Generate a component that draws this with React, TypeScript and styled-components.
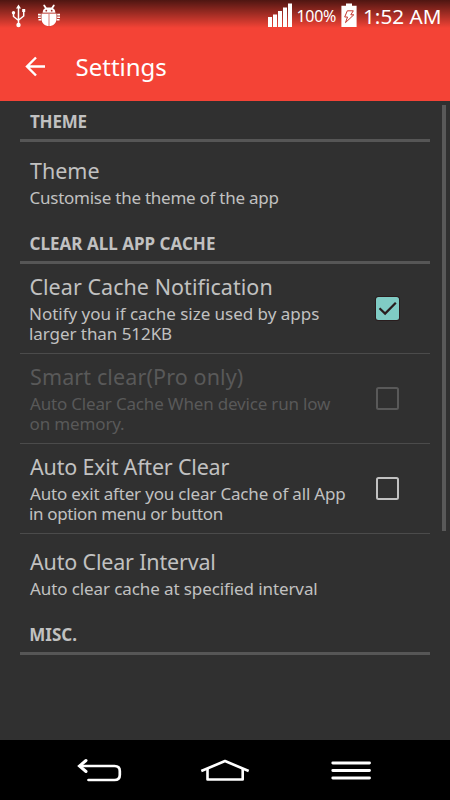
import React from 'react';
import styled, { createGlobalStyle } from 'styled-components';

const GlobalStyle = createGlobalStyle`
  body { margin: 0; background: #303030; }
`;

const Screen = styled.div`
  display: flex;
  flex-direction: column;
  width: 450px;
  height: 800px;
  overflow: hidden;
  background: #303030;
  color: #c1c1c1;
  font-family: "Noto Sans", sans-serif;
`;

const TopArea = styled.header`
  flex: none;
  height: 101px;
  background: linear-gradient(to bottom, rgba(0, 0, 0, 0.68), rgba(0, 0, 0, 0) 28px), #f44336;
  color: #fff;
`;

const StatusBar = styled.div`
  display: flex;
  align-items: flex-start;
  height: 33px;
  svg { display: block; flex: none; }
`;

const StatusSpacer = styled.div`
  flex: 1;
`;

const BatteryText = styled.span`
  width: 48px;
  padding: 6px 0 0 3.5px;
  box-sizing: border-box;
  font-size: 16px;
  line-height: 20px;
  letter-spacing: -0.3px;
`;

const Clock = styled.span`
  width: 92px;
  padding: 4px 0 0 5px;
  box-sizing: border-box;
  font-size: 20.7px;
  line-height: 24px;
  white-space: nowrap;
`;

const Toolbar = styled.div`
  display: flex;
  align-items: center;
  height: 68px;
  padding-left: 24px;
  svg { display: block; }
`;

const ToolbarTitle = styled.h1`
  margin: 0 0 0 29.5px;
  font-size: 24px;
  font-weight: 400;
  line-height: 34px;
`;

const Body = styled.main`
  display: flex;
  flex: 1;
  min-height: 0;
`;

const List = styled.div`
  width: 410px;
  margin-left: 20px;
`;

const Scrollbar = styled.div`
  width: 4px;
  height: 426px;
  margin: 4px 0 0 12px;
  background: #595959;
`;

const SectionHeader = styled.h2`
  box-sizing: border-box;
  height: 41px;
  margin: 0;
  padding: 10px 10px 0;
  border-bottom: 3px solid #565656;
  font-size: 17px;
  font-weight: 700;
  line-height: 22px;
`;

const Row = styled.section<{ $height: number; $top: number; $divider?: boolean; $disabled?: boolean }>`
  display: flex;
  box-sizing: border-box;
  height: ${p => p.$height}px;
  padding: ${p => p.$top}px 10px 0;
  border-bottom: ${p => (p.$divider ? '1px solid #4b4b4b' : 'none')};
  color: ${p => (p.$disabled ? '#595959' : '#c1c1c1')};
`;

const RowText = styled.div`
  width: 346px;
`;

const Line = styled.span<{ $spacing: number; $shift?: number }>`
  display: block;
  margin-left: ${p => p.$shift ?? 0}px;
  letter-spacing: ${p => p.$spacing}px;
  white-space: nowrap;
`;

const Title = styled.div`
  font-size: 21.5px;
  line-height: 28px;
`;

const Summary = styled.div`
  margin-top: 3px;
  font-size: 17px;
  line-height: 20.4px;
`;

const Check = styled.span<{ $checked?: boolean }>`
  box-sizing: border-box;
  flex: none;
  width: 23px;
  height: 23px;
  margin-top: 24px;
  border: ${p => (p.$checked ? 'none' : '2.5px solid currentColor')};
  border-radius: 2.5px;
  background: ${p => (p.$checked ? '#80cbc4' : 'transparent')};
  box-shadow: ${p => (p.$checked ? '0 0 0 1px #291c1d' : 'none')};
  svg { display: block; }
`;

const NavBar = styled.nav`
  display: grid;
  grid-template-columns: 124px 130px 42px;
  flex: none;
  height: 60px;
  box-sizing: border-box;
  padding: 16px 0 0 76px;
  background: #000;
  svg { display: block; }
`;

const UsbIcon = () => (
  <svg width="36" height="33" viewBox="0 0 36 33" fill="#fff">
    <path d="M18.5 4.500l2.500 4h-5z" />
    <path d="M18.500 7v17M13.500 13v3.500l5 4M23.700 11v5l-5 4" fill="none" stroke="#fff" strokeWidth="1.500" />
    <circle cx="18.500" cy="25" r="2.200" />
    <circle cx="13.500" cy="12.800" r="1.700" />
    <rect x="22.200" y="9" width="3" height="3" />
  </svg>
);

const BugIcon = () => (
  <svg width="26" height="33" viewBox="36 0 26 33">
    <path d="M44.200 5.500l2.300 3.500M53.800 5.500L51.500 9" stroke="#fff" strokeWidth="1.800" strokeLinecap="round" />
    <path d="M42.700 12.700c0-3.300 2-5.200 6.300-5.200s6.300 1.900 6.300 5.200z" fill="#fff" />
    <path d="M41.500 13.400h15v5c0 4.800-3.200 7.600-7.500 7.600s-7.500-2.800-7.500-7.600z" fill="#fff" />
    <path d="M38 14.600h2.800M38 17.200h2.800M38.500 19.800h2.800M57.200 14.600h2.800M57.200 17.200h2.800M56.700 19.800h2.800" stroke="#fff" strokeWidth="1.600" />
    <path d="M49 14v12M42 13.300h14" stroke="#d77a74" strokeWidth="1" />
    <circle cx="46.300" cy="10.700" r=".9" fill="#9d2c25" />
    <circle cx="51.700" cy="10.700" r=".9" fill="#9d2c25" />
  </svg>
);

const SignalIcon = () => (
  <svg width="25" height="33" viewBox="0 0 25 33" fill="#fff">
    <rect x="0" y="17" width="4" height="10" />
    <rect x="5" y="14.500" width="4" height="12.500" />
    <rect x="10" y="11" width="4" height="16" />
    <rect x="15" y="7.500" width="4" height="19.500" />
    <rect x="20" y="3.500" width="4" height="23.500" />
  </svg>
);

const BatteryIcon = () => (
  <svg width="17" height="33" viewBox="0 0 17 33">
    <path d="M5 3.500h6v2.200h4.600v21.300H.4V5.700H5z" fill="#fff" />
    <path d="M6.300 10.800h6l-2.500 4h3L4.500 22.600l2-5.600H3.700z" fill="none" stroke="#c5362d" strokeWidth="1" />
  </svg>
);

const BackArrow = () => (
  <svg width="22" height="22" viewBox="0 0 22 22" fill="none" stroke="#fff" strokeWidth="2.400">
    <path d="M21 10.500H3M12 1.500l-9 9 9 9" />
  </svg>
);

const BackIcon = () => (
  <svg width="48" height="28" viewBox="76 756 48 28" fill="none" stroke="#fff" strokeWidth="2.700">
    <path d="M80 766H114.500Q119.800 766 119.800 771V775Q119.800 780 114.500 780H88.500" strokeLinecap="round" />
    <path d="M86 760.500l-6.500 5.500 6.500 5.500" strokeWidth="3" strokeLinecap="round" />
  </svg>
);

const HomeIcon = () => (
  <svg width="50" height="28" viewBox="200 756 50 28" fill="none" stroke="#fff" strokeWidth="2.600" strokeLinejoin="round" strokeLinecap="square">
    <path d="M202.500 770.500L225 761l22.500 9.500" />
    <path d="M207.500 770v9.500h35.200V770" />
  </svg>
);

const MenuIcon = () => (
  <svg width="42" height="28" viewBox="330 756 42 28" stroke="#fff" strokeWidth="2.900" strokeLinecap="round">
    <path d="M332.800 763h36.700M332.800 770.500h36.700M332.800 778h36.700" />
  </svg>
);

export default function App() {
  return (
    <Screen>
      <GlobalStyle />
      <TopArea>
        <StatusBar>
          <UsbIcon />
          <BugIcon />
          <StatusSpacer />
          <SignalIcon />
          <BatteryText>100%</BatteryText>
          <BatteryIcon />
          <Clock>1:52 AM</Clock>
        </StatusBar>
        <Toolbar>
          <BackArrow />
          <ToolbarTitle>Settings</ToolbarTitle>
        </Toolbar>
      </TopArea>
      <Body>
        <List>
          <SectionHeader><Line $spacing={-0.2}>THEME</Line></SectionHeader>
          <Row $height={81} $top={15}>
            <RowText>
              <Title><Line $spacing={0}>Theme</Line></Title>
              <Summary><Line $spacing={-0.25} $shift={-0.5}>Customise the theme of the app</Line></Summary>
            </RowText>
          </Row>
          <SectionHeader><Line $spacing={0.02} $shift={-0.5}>CLEAR ALL APP CACHE</Line></SectionHeader>
          <Row $height={90} $top={9} $divider>
            <RowText>
              <Title><Line $spacing={0.04} $shift={-0.6}>Clear Cache Notification</Line></Title>
              <Summary>
                <Line $spacing={-0.02} $shift={-1}>Notify you if cache size used by apps</Line>
                <Line $spacing={-0.06} $shift={-1}>larger than 512KB</Line>
              </Summary>
            </RowText>
            <Check $checked>
              <svg width="23" height="23" viewBox="0 0 23 23" fill="none" stroke="#291c1d" strokeWidth="2.200">
                <path d="M3.500 11.200l5.600 5.400L19.800 5.800" />
              </svg>
            </Check>
          </Row>
          <Row $height={90} $top={9} $divider $disabled>
            <RowText>
              <Title><Line $spacing={0.12}>Smart clear(Pro only)</Line></Title>
              <Summary>
                <Line $spacing={-0.18}>Auto Clear Cache When device run low</Line>
                <Line $spacing={-0.14} $shift={-0.5}>on memory.</Line>
              </Summary>
            </RowText>
            <Check />
          </Row>
          <Row $height={90} $top={9} $divider>
            <RowText>
              <Title><Line $spacing={-0.2}>Auto Exit After Clear</Line></Title>
              <Summary>
                <Line $spacing={-0.175}>Auto exit after you clear Cache of all App</Line>
                <Line $spacing={-0.36} $shift={-1}>in option menu or button</Line>
              </Summary>
            </RowText>
            <Check />
          </Row>
          <Row $height={80} $top={14}>
            <RowText>
              <Title><Line $spacing={-0.18}>Auto Clear Interval</Line></Title>
              <Summary><Line $spacing={-0.1}>Auto clear cache at specified interval</Line></Summary>
            </RowText>
          </Row>
          <SectionHeader><Line $spacing={0.05} $shift={-0.8}>MISC.</Line></SectionHeader>
        </List>
        <Scrollbar />
      </Body>
      <NavBar>
        <BackIcon />
        <HomeIcon />
        <MenuIcon />
      </NavBar>
    </Screen>
  );
}
